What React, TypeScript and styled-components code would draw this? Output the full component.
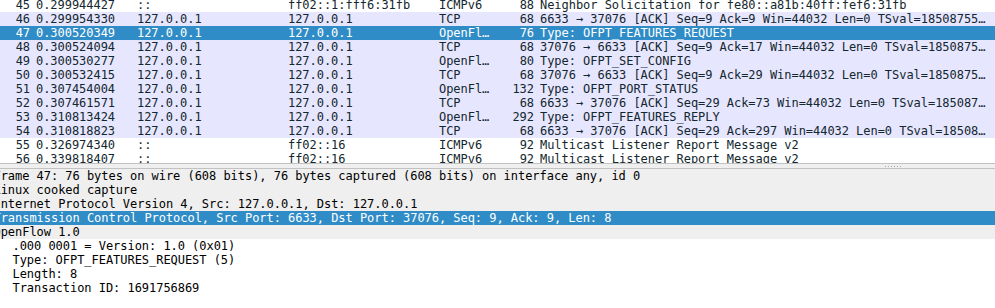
import React from "react";
import styled, { createGlobalStyle, css } from "styled-components";

const GlobalStyle = createGlobalStyle`
  html, body {
    margin: 0;
    padding: 0;
    background: #ffffff;
  }
  body {
    font-family: "DejaVu Sans Mono", "Liberation Mono", monospace;
    font-size: 12px;
    letter-spacing: -0.04px;
    color: #000000;
  }
`;

type Kind = "plain" | "tcp" | "selected";

interface Packet {
  no: number;
  time: string;
  src: string;
  dst: string;
  proto: string;
  len: number;
  info: string;
  kind: Kind;
}

const packets: Packet[] = [
  { no: 45, time: "0.299944427", src: "::", dst: "ff02::1:fff6:31fb", proto: "ICMPv6", len: 88, info: "Neighbor Solicitation for fe80::a81b:40ff:fef6:31fb", kind: "plain" },
  { no: 46, time: "0.299954330", src: "127.0.0.1", dst: "127.0.0.1", proto: "TCP", len: 68, info: "6633 → 37076 [ACK] Seq=9 Ack=9 Win=44032 Len=0 TSval=18508755…", kind: "tcp" },
  { no: 47, time: "0.300520349", src: "127.0.0.1", dst: "127.0.0.1", proto: "OpenFl…", len: 76, info: "Type: OFPT_FEATURES_REQUEST", kind: "selected" },
  { no: 48, time: "0.300524094", src: "127.0.0.1", dst: "127.0.0.1", proto: "TCP", len: 68, info: "37076 → 6633 [ACK] Seq=9 Ack=17 Win=44032 Len=0 TSval=1850875…", kind: "tcp" },
  { no: 49, time: "0.300530277", src: "127.0.0.1", dst: "127.0.0.1", proto: "OpenFl…", len: 80, info: "Type: OFPT_SET_CONFIG", kind: "tcp" },
  { no: 50, time: "0.300532415", src: "127.0.0.1", dst: "127.0.0.1", proto: "TCP", len: 68, info: "37076 → 6633 [ACK] Seq=9 Ack=29 Win=44032 Len=0 TSval=1850875…", kind: "tcp" },
  { no: 51, time: "0.307454004", src: "127.0.0.1", dst: "127.0.0.1", proto: "OpenFl…", len: 132, info: "Type: OFPT_PORT_STATUS", kind: "tcp" },
  { no: 52, time: "0.307461571", src: "127.0.0.1", dst: "127.0.0.1", proto: "TCP", len: 68, info: "6633 → 37076 [ACK] Seq=29 Ack=73 Win=44032 Len=0 TSval=185087…", kind: "tcp" },
  { no: 53, time: "0.310813424", src: "127.0.0.1", dst: "127.0.0.1", proto: "OpenFl…", len: 292, info: "Type: OFPT_FEATURES_REPLY", kind: "tcp" },
  { no: 54, time: "0.310818823", src: "127.0.0.1", dst: "127.0.0.1", proto: "TCP", len: 68, info: "6633 → 37076 [ACK] Seq=29 Ack=297 Win=44032 Len=0 TSval=18508…", kind: "tcp" },
  { no: 55, time: "0.326974340", src: "::", dst: "ff02::16", proto: "ICMPv6", len: 92, info: "Multicast Listener Report Message v2", kind: "plain" },
  { no: 56, time: "0.339818407", src: "::", dst: "ff02::16", proto: "ICMPv6", len: 92, info: "Multicast Listener Report Message v2", kind: "plain" },
];

type DetailKind = "header" | "child" | "selected";

interface DetailLine {
  text: string;
  kind: DetailKind;
  level: 0 | 1;
}

const details: DetailLine[] = [
  { text: "Frame 47: 76 bytes on wire (608 bits), 76 bytes captured (608 bits) on interface any, id 0", kind: "header", level: 0 },
  { text: "Linux cooked capture", kind: "header", level: 0 },
  { text: "Internet Protocol Version 4, Src: 127.0.0.1, Dst: 127.0.0.1", kind: "header", level: 0 },
  { text: "Transmission Control Protocol, Src Port: 6633, Dst Port: 37076, Seq: 9, Ack: 9, Len: 8", kind: "selected", level: 0 },
  { text: "OpenFlow 1.0", kind: "header", level: 0 },
  { text: ".000 0001 = Version: 1.0 (0x01)", kind: "child", level: 1 },
  { text: "Type: OFPT_FEATURES_REQUEST (5)", kind: "child", level: 1 },
  { text: "Length: 8", kind: "child", level: 1 },
  { text: "Transaction ID: 1691756869", kind: "child", level: 1 },
];

const SELECT_BG = "#308cc6";

const Window = styled.div`
  width: 995px;
  height: 308px;
  display: flex;
  flex-direction: column;
  overflow: hidden;
  background: #ffffff;
`;

const PacketList = styled.div`
  height: 163px;
  flex: none;
  overflow: hidden;
`;

const PacketScroll = styled.div`
  margin-top: -2px;
  display: flex;
  flex-direction: column;
`;

const PacketRow = styled.div<{ $kind: Kind }>`
  display: grid;
  grid-template-columns: 36px 101px 151px 151px 61px 40px 1fr;
  height: 14px;
  line-height: 14px;
  white-space: pre;
  ${({ $kind }) =>
    $kind === "tcp"
      ? css`
          background: #e7e6ff;
          color: #12272e;
        `
      : $kind === "selected"
      ? css`
          background: ${SELECT_BG};
          color: #ffffff;
        `
      : css`
          background: #ffffff;
          color: #12272e;
        `}
`;

const Cell = styled.span<{ $right?: boolean }>`
  overflow: hidden;
  white-space: pre;
  ${({ $right }) =>
    $right &&
    css`
      text-align: right;
      padding-right: 6px;
    `}
`;

const Splitter = styled.div`
  flex: none;
  height: 4px;
  border-top: 1px solid #c2c2c2;
  border-bottom: 1px solid #c2c2c2;
  background: #efefef;
  display: flex;
  justify-content: flex-end;
  align-items: center;
  padding-right: 93px;
`;

const Grip = styled.span`
  width: 17px;
  height: 1px;
  background-image: repeating-linear-gradient(
    to right,
    #a8a8a8 0px,
    #a8a8a8 1px,
    transparent 1px,
    transparent 3px
  );
`;

const DetailsPane = styled.div`
  flex: 1;
  overflow: hidden;
  display: flex;
  flex-direction: column;
  background: #ffffff;
`;

const DetailRow = styled.div<{ $kind: DetailKind }>`
  height: 14px;
  line-height: 14px;
  overflow: hidden;
  white-space: pre;
  ${({ $kind }) =>
    $kind === "header"
      ? css`
          background: #efefef;
          color: #000000;
        `
      : $kind === "selected"
      ? css`
          background: ${SELECT_BG};
          color: #ffffff;
        `
      : css`
          background: #ffffff;
          color: #000000;
        `}
`;

const DetailText = styled.span<{ $level: 0 | 1 }>`
  display: inline-block;
  margin-left: ${({ $level }) => ($level === 0 ? "-6.5px" : "12.5px")};
`;

export default function App() {
  return (
    <>
      <GlobalStyle />
      <Window>
        <PacketList>
          <PacketScroll>
            {packets.map((p) => (
              <PacketRow key={p.no} $kind={p.kind}>
                <Cell $right>{p.no}</Cell>
                <Cell>{p.time}</Cell>
                <Cell>{p.src}</Cell>
                <Cell>{p.dst}</Cell>
                <Cell>{p.proto}</Cell>
                <Cell $right>{p.len}</Cell>
                <Cell>{p.info}</Cell>
              </PacketRow>
            ))}
          </PacketScroll>
        </PacketList>
        <Splitter>
          <Grip />
        </Splitter>
        <DetailsPane>
          {details.map((d, i) => (
            <DetailRow key={i} $kind={d.kind}>
              <DetailText $level={d.level}>{d.text}</DetailText>
            </DetailRow>
          ))}
        </DetailsPane>
      </Window>
    </>
  );
}
